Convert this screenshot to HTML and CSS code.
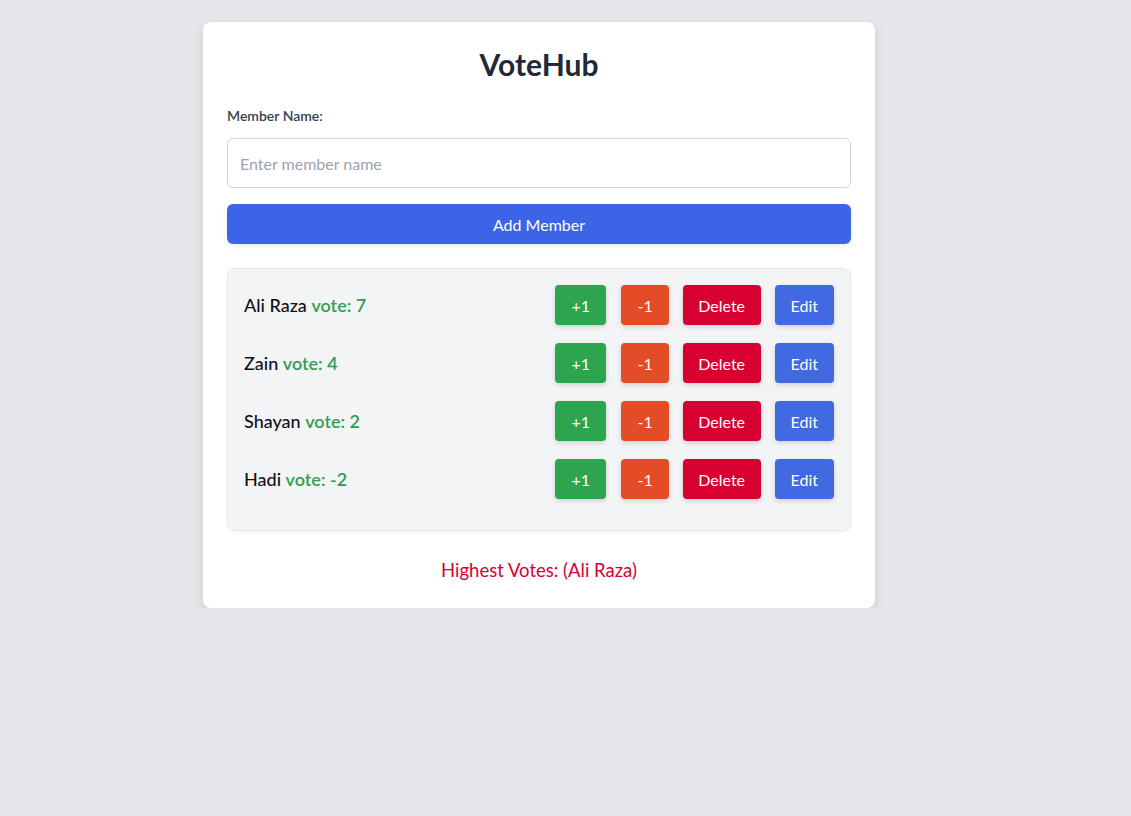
FILE: index.html
```html
<!DOCTYPE html>
<html lang="en">
<head>
<meta charset="utf-8">
<title>VoteHub</title>
<link rel="stylesheet" href="styles.css">
</head>
<body>
<main class="card">
  <h1 class="title">VoteHub</h1>
  <label class="label" for="name">Member Name:</label>
  <input class="input" id="name" type="text" placeholder="Enter member name">
  <button class="btn btn-add">Add Member</button>
  <ul class="list">
    <li class="row">
      <span class="name">Ali Raza <span class="vote">vote: 7</span></span>
      <div class="actions">
        <button class="btn btn-sm btn-plus">+1</button>
        <button class="btn btn-sm btn-minus">-1</button>
        <button class="btn btn-sm btn-del">Delete</button>
        <button class="btn btn-sm btn-edit">Edit</button>
      </div>
    </li>
    <li class="row">
      <span class="name">Zain <span class="vote">vote: 4</span></span>
      <div class="actions">
        <button class="btn btn-sm btn-plus">+1</button>
        <button class="btn btn-sm btn-minus">-1</button>
        <button class="btn btn-sm btn-del">Delete</button>
        <button class="btn btn-sm btn-edit">Edit</button>
      </div>
    </li>
    <li class="row">
      <span class="name">Shayan <span class="vote">vote: 2</span></span>
      <div class="actions">
        <button class="btn btn-sm btn-plus">+1</button>
        <button class="btn btn-sm btn-minus">-1</button>
        <button class="btn btn-sm btn-del">Delete</button>
        <button class="btn btn-sm btn-edit">Edit</button>
      </div>
    </li>
    <li class="row">
      <span class="name">Hadi <span class="vote">vote: -2</span></span>
      <div class="actions">
        <button class="btn btn-sm btn-plus">+1</button>
        <button class="btn btn-sm btn-minus">-1</button>
        <button class="btn btn-sm btn-del">Delete</button>
        <button class="btn btn-sm btn-edit">Edit</button>
      </div>
    </li>
  </ul>
  <p class="highest">Highest Votes: (Ali Raza)</p>
</main>
</body>
</html>
```
FILE: styles.css
```css
* { box-sizing: border-box; }
html, body { margin: 0; padding: 0; }
body {
  background: #e5e7eb;
  font-family: Lato, "Noto Sans", sans-serif;
  color: #111827;
  padding-top: 22px;
  padding-left: 203px;
}
.card {
  width: 672px;
  background: #ffffff;
  border-radius: 8px;
  box-shadow: 0 4px 12px rgba(0, 0, 0, 0.12);
  padding: 23px 24px 24px;
  display: flex;
  flex-direction: column;
}
.title {
  margin: 0;
  text-align: center;
  font-size: 30px;
  line-height: 38px;
  font-weight: 700;
  color: #1f2937;
}
.label {
  margin-top: 23px;
  font-size: 14px;
  line-height: 20px;
  font-weight: 600;
  color: #374151;
}
.input {
  margin-top: 12px;
  height: 50px;
  border: 1px solid #d1d5db;
  border-radius: 6px;
  padding: 0 12px;
  font-family: inherit;
  font-size: 16px;
  color: #111827;
  outline: none;
}
.input::placeholder { color: #9ca3af; }
.btn {
  border: none;
  color: #ffffff;
  font-family: inherit;
  font-size: 16px;
  cursor: pointer;
}
.btn-add {
  margin-top: 16px;
  height: 40px;
  border-radius: 6px;
  background: #3c64e6;
  box-shadow: 0 2px 6px rgba(0, 0, 0, 0.08);
}
.list {
  list-style: none;
  margin: 24px 0 0;
  padding: 16px 16px 13px;
  background: #f3f4f6;
  border: 1px solid #e5e7eb;
  border-radius: 8px;
  box-shadow: 0 1px 3px rgba(0, 0, 0, 0.06);
}
.row {
  display: flex;
  align-items: center;
  justify-content: space-between;
  height: 40px;
  margin-bottom: 18px;
}
.name {
  font-size: 18px;
  color: #111111;
  font-weight: 500;
}
.vote {
  color: #2f9e50;
  font-weight: 600;
}
.actions {
  display: flex;
  gap: 14px;
}
.btn-sm {
  height: 40px;
  padding: 0 16px;
  border-radius: 4px;
  box-shadow: 0 2px 5px rgba(0, 0, 0, 0.15);
}
.btn-plus { background: #2da44e; padding: 0 16.5px; }
.btn-minus { background: #e34c26; margin-left: 1px; }
.btn-del { background: #d70030; padding: 0 15.5px; }
.btn-edit { background: #4169e1; }
.highest {
  margin: 26px 0 0;
  text-align: center;
  font-size: 18.5px;
  line-height: 27px;
  color: #d70035;
}
```
